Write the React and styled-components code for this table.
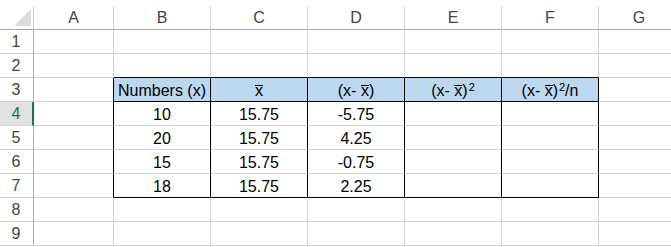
import React from "react";
import styled, { createGlobalStyle } from "styled-components";

const GlobalStyle = createGlobalStyle`
  html, body {
    margin: 0;
    padding: 0;
    background: #ffffff;
    overflow: hidden;
  }
`;

const GRID = "#d4d4d4";
const HEAD_EDGE = "#ababab";
const BLACK = "#000000";
const FILL = "#bdd7ee";
const GREEN = "#217346";

const Sheet = styled.div`
  padding-top: 6px;
  font-family: "Liberation Sans", Arial, sans-serif;
  font-size: 16px;
  color: #000;
  width: 671px;
  height: 247px;
  box-sizing: border-box;
  overflow: hidden;
`;

const Row = styled.div`
  display: flex;
  height: 24px;
`;

const Corner = styled.div`
  box-sizing: border-box;
  width: 34px;
  height: 24px;
  flex: none;
  border-right: 1px solid ${GRID};
  border-bottom: 1px solid ${HEAD_EDGE};
  display: flex;
  align-items: flex-end;
  justify-content: flex-end;
  padding: 0 2px 3px 0;
`;

const ColHead = styled.div`
  box-sizing: border-box;
  width: ${(p) => p.$w}px;
  height: 24px;
  flex: none;
  border-right: 1px solid ${GRID};
  border-bottom: 1px solid ${HEAD_EDGE};
  display: flex;
  align-items: center;
  justify-content: center;
  color: #444;
  padding-top: 1px;
`;

const RowHead = styled.div`
  box-sizing: border-box;
  width: 34px;
  height: 24px;
  flex: none;
  border-right: ${(p) => (p.$active ? `2px solid ${GREEN}` : `1px solid ${HEAD_EDGE}`)};
  border-bottom: 1px solid ${GRID};
  background: ${(p) => (p.$active ? "#e1e1e1" : "#ffffff")};
  color: ${(p) => (p.$active ? GREEN : "#444")};
  display: flex;
  align-items: center;
  justify-content: center;
  padding: 1px ${(p) => (p.$active ? 0 : 1)}px 0 0;
`;

const Cell = styled.div`
  box-sizing: border-box;
  width: ${(p) => p.$w}px;
  height: 24px;
  flex: none;
  border-right: 1px solid ${(p) => p.$right};
  border-bottom: 1px solid ${(p) => p.$bottom};
  background: ${(p) => p.$bg};
  display: flex;
  align-items: center;
  justify-content: center;
  white-space: pre;
  padding-top: 2px;
`;

const Bar = styled.span`
  position: relative;

  &::before {
    content: "";
    position: absolute;
    left: 0;
    right: 0;
    top: 3px;
    border-top: 1px solid currentColor;
  }
`;

const Sup = styled.span`
  font-size: 11px;
  position: relative;
  top: -4px;
  margin-left: 1px;
`;

const cols = [
  { key: "A", w: 80 },
  { key: "B", w: 97 },
  { key: "C", w: 97 },
  { key: "D", w: 97 },
  { key: "E", w: 97 },
  { key: "F", w: 97 },
  { key: "G", w: 81 },
];

const xbar = <Bar>x</Bar>;
const diff = <>{"(x- "}{xbar})</>;

const header = [
  "",
  "Numbers (x)",
  xbar,
  diff,
  <>{diff}<Sup>2</Sup></>,
  <>{diff}<Sup>2</Sup>/n</>,
  "",
];

const values = [
  [10, "15.75", "-5.75"],
  [20, "15.75", "4.25"],
  [15, "15.75", "-0.75"],
  [18, "15.75", "2.25"],
];

const content = (r, c) => {
  if (r === 3) return header[c];
  if (r >= 4 && r <= 7 && c >= 1 && c <= 3) return values[r - 4][c - 1];
  return "";
};

const inTableCols = (c) => c >= 1 && c <= 5;

const rightColor = (r, c) => (r >= 3 && r <= 7 && c <= 5 ? BLACK : GRID);

const bottomColor = (r, c) =>
  inTableCols(c) && (r === 2 || r === 3 || r === 7) ? BLACK : GRID;

const CornerMark = () => (
  <svg width="17" height="17" viewBox="0 0 17 17">
    <polygon points="17,0 17,17 0,17" fill="#dcdcdc" />
  </svg>
);

const rows = [1, 2, 3, 4, 5, 6, 7, 8, 9];

export default function App() {
  return (
    <>
      <GlobalStyle />
      <Sheet>
        <Row>
          <Corner>
            <CornerMark />
          </Corner>
          {cols.map((col) => (
            <ColHead key={col.key} $w={col.w}>
              {col.key}
            </ColHead>
          ))}
        </Row>
        {rows.map((r) => (
          <Row key={r}>
            <RowHead $active={r === 4}>{r}</RowHead>
            {cols.map((col, c) => (
              <Cell
                key={col.key}
                $w={col.w}
                $right={rightColor(r, c)}
                $bottom={bottomColor(r, c)}
                $bg={r === 3 && inTableCols(c) ? FILL : "#ffffff"}
              >
                {content(r, c)}
              </Cell>
            ))}
          </Row>
        ))}
      </Sheet>
    </>
  );
}
